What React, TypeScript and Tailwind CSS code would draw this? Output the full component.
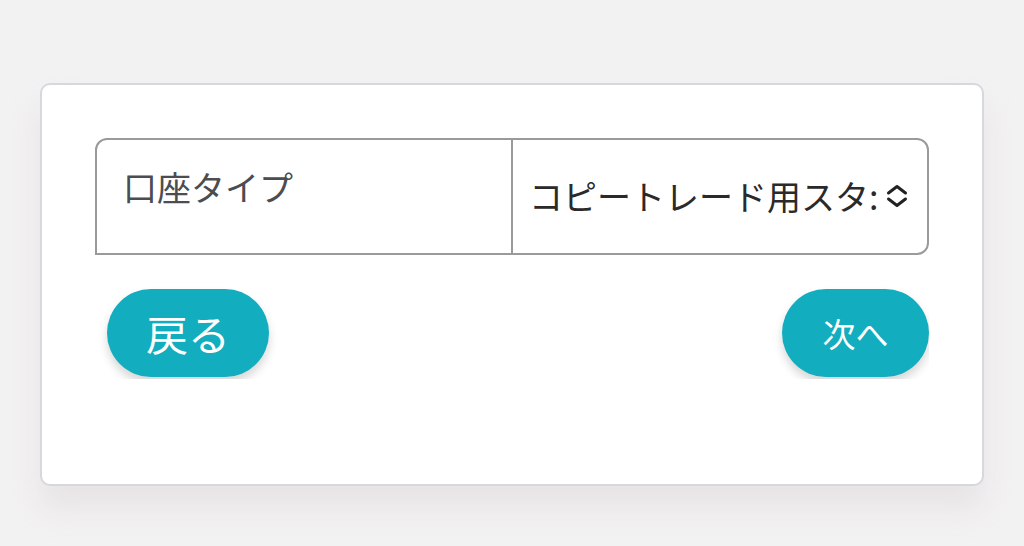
import React from "react";

export default function App() {
  return (
    <div
      className="w-[1024px] h-[546px] bg-[#f3f2f3] pt-[83px] px-[40px] overflow-hidden"
      style={{ fontFamily: '"Noto Sans CJK JP", "Noto Sans", sans-serif' }}
    >
      <div className="w-[944px] h-[403px] bg-white border-2 border-[#d6d7df] rounded-[10px] shadow-[0_22px_30px_rgba(205,195,195,0.3)] pt-[53px] px-[53px]">
        <div className="flex h-[117px] border-2 border-[#9a9a9a] rounded-t-[12px] rounded-br-[12px]">
          <div className="w-[416px] border-r-2 border-[#9a9a9a] pl-[26px] pt-[26px] text-[34px] leading-[42px] text-[#4b4d52]">
            口座タイプ
          </div>
          <div className="flex-1 flex items-center pl-[16px] pr-[12px] pb-[2px] text-[34px] text-[#2a2a2a]">
            <span className="whitespace-nowrap overflow-hidden">コピートレード用スタ:</span>
            <svg width="26" height="26" viewBox="0 0 26 26" className="ml-[6px] shrink-0">
              <path d="M4.5 10 L13 3.5 L21.5 10" fill="none" stroke="#222" strokeWidth="3" strokeLinecap="round" strokeLinejoin="round" />
              <path d="M4.5 16 L13 22.5 L21.5 16" fill="none" stroke="#222" strokeWidth="3" strokeLinecap="round" strokeLinejoin="round" />
            </svg>
          </div>
        </div>
        <div className="flex justify-between pl-[12px] pt-[34px] h-[124px] overflow-hidden">
          <button className="w-[162px] h-[88px] rounded-full bg-[#12adbe] text-white text-[42px] leading-none shadow-[0_6px_10px_rgba(0,0,0,0.16)]">
            戻る
          </button>
          <button className="w-[147px] h-[88px] rounded-full bg-[#12adbe] text-white text-[33px] leading-none shadow-[0_6px_10px_rgba(0,0,0,0.16)]">
            次へ
          </button>
        </div>
      </div>
    </div>
  );
}
